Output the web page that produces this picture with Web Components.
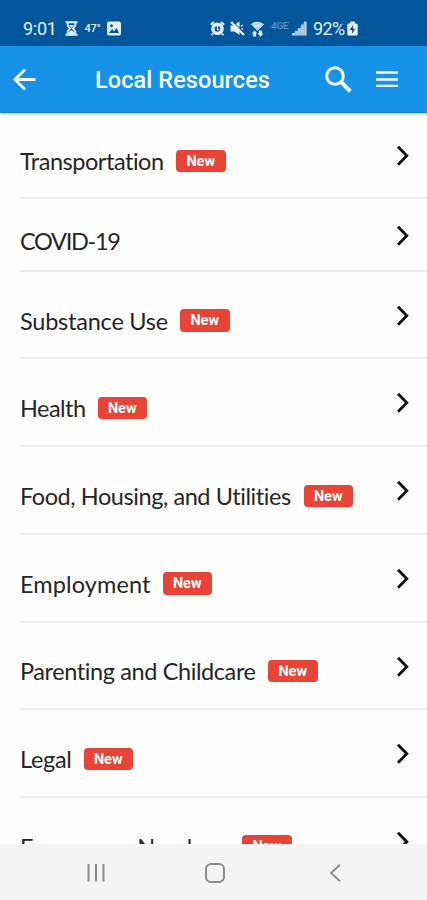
<!DOCTYPE html>
<html lang="en">
<head>
<meta charset="utf-8">
<title>Local Resources</title>
<style>
html,body{margin:0;height:100%;overflow:hidden;background:#fefefe}
</style>
</head>
<body>
<resource-app></resource-app>
<script>
const define = (name, html, setup) => {
  const t = document.createElement('template');
  t.innerHTML = html;
  customElements.define(name, class extends HTMLElement {
    connectedCallback() {
      if (this.shadowRoot) return;
      this.attachShadow({mode: 'open'}).append(t.content.cloneNode(true));
      if (setup) setup(this, this.shadowRoot);
    }
  });
};

define('status-bar', `
<style>
:host{display:flex;height:46px;box-sizing:border-box;padding:11px 69px 0 23px;background:#02569b;color:#e4effa;align-items:center;justify-content:space-between;font:18px/36px Roboto,sans-serif}
.g{display:flex;align-items:center;height:35px}
svg{display:block;flex:none}
.t{white-space:nowrap;display:block}
</style>
<div class="g">
  <span class="t" style="width:33px;letter-spacing:-.3px">9:01</span>
  <svg style="margin-left:9px" width="13" height="15" viewBox="0 0 13 15"><path d="M.5 1.2h12M.5 13.8h12" stroke="#e4effa" stroke-width="2"/><path d="M2.7 2v2.7L5 7.5 2.7 10.3V13M10.3 2v2.7L8 7.5l2.3 2.8V13" fill="none" stroke="#e4effa" stroke-width="1.8"/><path d="M4 4h5L6.5 7zM3.8 13v-2l2.7-2 2.7 2v2z" fill="#e4effa"/></svg>
  <span class="t" style="margin-left:6.5px;width:16px;font-size:11px;font-weight:500;letter-spacing:-.2px">47°</span>
  <svg style="margin-left:6.5px" width="14" height="15" viewBox="0 0 14 15"><rect y=".5" width="14" height="14" rx="2" fill="#e4effa"/><path d="M2 12l3-4 2 2.3L9.5 7l2.7 5z" fill="#02569b"/><circle cx="4.5" cy="4.7" r="1.5" fill="#02569b"/></svg>
</div>
<div class="g">
  <svg style="margin-left:1px;margin-right:-1px" width="15" height="15" viewBox="0 0 15 15"><path d="M.8 3.8L4 .9M14.2 3.8L11 .9M3 12.6l-1.3 1.6M12 12.6l1.3 1.6" stroke="#e4effa" stroke-width="2"/><circle cx="7.5" cy="7.8" r="4.6" fill="none" stroke="#e4effa" stroke-width="3.4"/><path d="M7.5 5v3.2l2 1" fill="none" stroke="#e4effa" stroke-width="1.2"/></svg>
  <svg style="margin-left:5.5px" width="15" height="15" viewBox="0 0 15 15"><path d="M.5 4.5h3L9.500.5v13.500L4.500 10.500h-4z" fill="#e4effa"/><path d="M1.2 1L14 14" stroke="#e4effa" stroke-width="2.4"/><path d="M3.200.8L15 12.500" stroke="#02569b" stroke-width="1"/><path d="M11 5.500l2-1.500M11.500 8h1.500" stroke="#e4effa" stroke-width="1.300"/></svg>
  <svg style="margin-left:6.5px" width="13" height="16" viewBox="0 0 13 16"><path d="M.5 3.8Q6.5-1.4 12.5 3.8L6.5 10z" fill="#b5cee6"/><path d="M.5 3.8Q6.5-1.2 12.5 3.8M3 6.2q3.5-3 7 0" fill="none" stroke="#e4effa" stroke-width="1.300"/><path d="M.8 12.500L3.600 9.500l2.800 3H5.100V15.500h-3v-3zM6.600 12.500h1.300V9.500h3v3h1.500l-2.900 3.200z" fill="#e4effa"/></svg>
  <span class="t" style="margin-left:7px;width:19px;color:#5d91c3;font-size:9px;line-height:10px;margin-top:-6px;font-weight:500"><span style="display:inline-block;transform:scaleX(1.15);transform-origin:0 0;letter-spacing:-.4px">4GE</span></span>
  <svg style="margin-left:2px" width="15" height="15" viewBox="0 0 15 15"><path d="M0 14.5V12h3v2.5zM3 14.5V9.8h3v4.7zM6 14.5V7h3v7.5zM9 14.5v-11h3v11zM12 14.5V.5h2.6v14z" fill="#b8d0e7"/><path d="M3 14.5V11M6 14.5V8M9 14.5V5M12 14.5V2" stroke="#7fa9d0" stroke-width=".7"/></svg>
  <span class="t" style="margin-left:6px;width:32px;letter-spacing:-.6px">92%</span>
  <svg style="margin-left:2px" width="11" height="15" viewBox="0 0 11 15"><path d="M3.2.5h4.6v2h1.7Q10.7 2.5 10.7 4v9q0 1.5-1.2 1.5h-8Q.3 14.5.3 13V4q0-1.5 1.2-1.5h1.7z" fill="#e4effa"/><path d="M6 4L2.8 9h2.4L5 12.8 8.2 7.7H5.8z" fill="#02427e"/></svg>
</div>`);

define('title-bar', `
<style>
:host{display:flex;height:67px;box-sizing:border-box;padding:0 28px 0 13px;background:#1792e9;border-bottom:1px solid #1583d2;align-items:center;color:#f8fcff;position:relative;z-index:1;box-shadow:0 1px 3px #0004}
svg{display:block;flex:none}
h1{font:500 23.5px/30px Roboto,sans-serif;margin:1px 0 0 59px;width:175px;white-space:nowrap}
</style>
<svg width="23" height="24" viewBox="0 0 23 24"><path d="M22.5 12.5H2.5M12 2.5l-10 10 10 10" fill="none" stroke="currentColor" stroke-width="2.8"/></svg>
<h1><slot></slot></h1>
<svg style="margin:0 0 0 55px" width="27" height="27" viewBox="0 0 27 27"><circle cx="10" cy="10" r="8.3" fill="none" stroke="currentColor" stroke-width="3"/><path d="M16 16l9.3 9.3" stroke="currentColor" stroke-width="4"/></svg>
<svg style="margin-left:24px" width="22" height="16" viewBox="0 0 22 16"><path d="M0 1.5h22M0 8.5h22M0 15h22" stroke="currentColor" stroke-width="2.6"/></svg>`,
(el, root) => fit(root.querySelector('h1'), 175, 15));

define('new-badge', `
<style>
:host{display:block;width:49.5px;height:22.5px;box-sizing:border-box;border-radius:4px;background:#e84335;color:#fff;font:700 14.5px/23px Roboto,sans-serif;text-align:center;flex:none}
</style><slot></slot>`);

define('resource-row', `
<style>
:host{display:flex;margin-left:20px;height:87.7px;box-sizing:border-box;padding:33.4px 17.5px 0 0;border-bottom:2px solid #ebebeb;align-items:flex-start}
:host([compact]){height:72.8px;padding-top:26.4px}
.label{font:23.5px/30px Lato,sans-serif;color:#262626;white-space:nowrap;flex:none;margin-top:.4px}
::slotted(new-badge){margin:4px 0 0 12px}
svg{margin:-.4px 0 0 auto;display:block;flex:none}
</style>
<span class="label"></span><slot></slot>
<svg width="14" height="22" viewBox="0 0 14 22"><path d="M2 1.7l8.8 9-8.8 9" fill="none" stroke="#111" stroke-width="2.9"/></svg>`,
(el, root) => {
  const label = root.querySelector('.label');
  label.textContent = el.getAttribute('label');
  fit(label, +el.getAttribute('span'), label.textContent.length);
});

define('nav-bar', `
<style>
:host{display:flex;height:56px;background:#f4f4f4;align-items:center;padding:2px 86px 0 86px;box-sizing:border-box;justify-content:space-between}
svg{display:block}
</style>
<svg width="20" height="18" viewBox="0 0 20 18"><path d="M2.5 0v17.5M10 0v17.5M17.5 0v17.5" stroke="#8b8b8b" stroke-width="2"/></svg>
<svg style="margin-left:-5px" width="20" height="20" viewBox="0 0 20 20"><rect x="1" y="1" width="18" height="18" rx="5" fill="none" stroke="#8b8b8b" stroke-width="2"/></svg>
<svg width="12" height="18" viewBox="0 0 12 18"><path d="M11 .8L2 9l9 8.2" fill="none" stroke="#8b8b8b" stroke-width="1.9"/></svg>`);

define('resource-app', `
<style>
:host{display:flex;flex-direction:column;height:900px;width:427px;overflow:hidden;background:#fefefe}
main{flex:1;min-height:0;overflow:hidden;display:flex;flex-direction:column}
main>*{flex:none}
main>:first-child{height:86px;padding-top:32.7px}
</style>
<status-bar></status-bar>
<title-bar>Local Resources</title-bar>
<main>
<resource-row label="Transportation" span="144"><new-badge>New</new-badge></resource-row>
<resource-row label="COVID-19" span="99.5" compact></resource-row>
<resource-row label="Substance Use" span="148"><new-badge>New</new-badge></resource-row>
<resource-row label="Health" span="65.5"><new-badge>New</new-badge></resource-row>
<resource-row label="Food, Housing, and Utilities" span="271.5"><new-badge>New</new-badge></resource-row>
<resource-row label="Employment" span="130.5"><new-badge>New</new-badge></resource-row>
<resource-row label="Parenting and Childcare" span="236"><new-badge>New</new-badge></resource-row>
<resource-row label="Legal" span="51.5"><new-badge>New</new-badge></resource-row>
<resource-row label="Emergency Numbers" span="210"><new-badge>New</new-badge></resource-row>
</main>
<nav-bar></nav-bar>`);

/* Spreads tracking so that a text fills the given width. */
function fit(el, width, count) {
  const range = document.createRange();
  const slot = el.querySelector('slot');
  range.selectNodeContents(slot ? slot.assignedNodes()[0] : el);
  const natural = range.getBoundingClientRect().width;
  if (natural) el.style.letterSpacing = (width - natural) / count + 'px';
  el.style.width = width + 'px';
}
</script>
</body>
</html>
